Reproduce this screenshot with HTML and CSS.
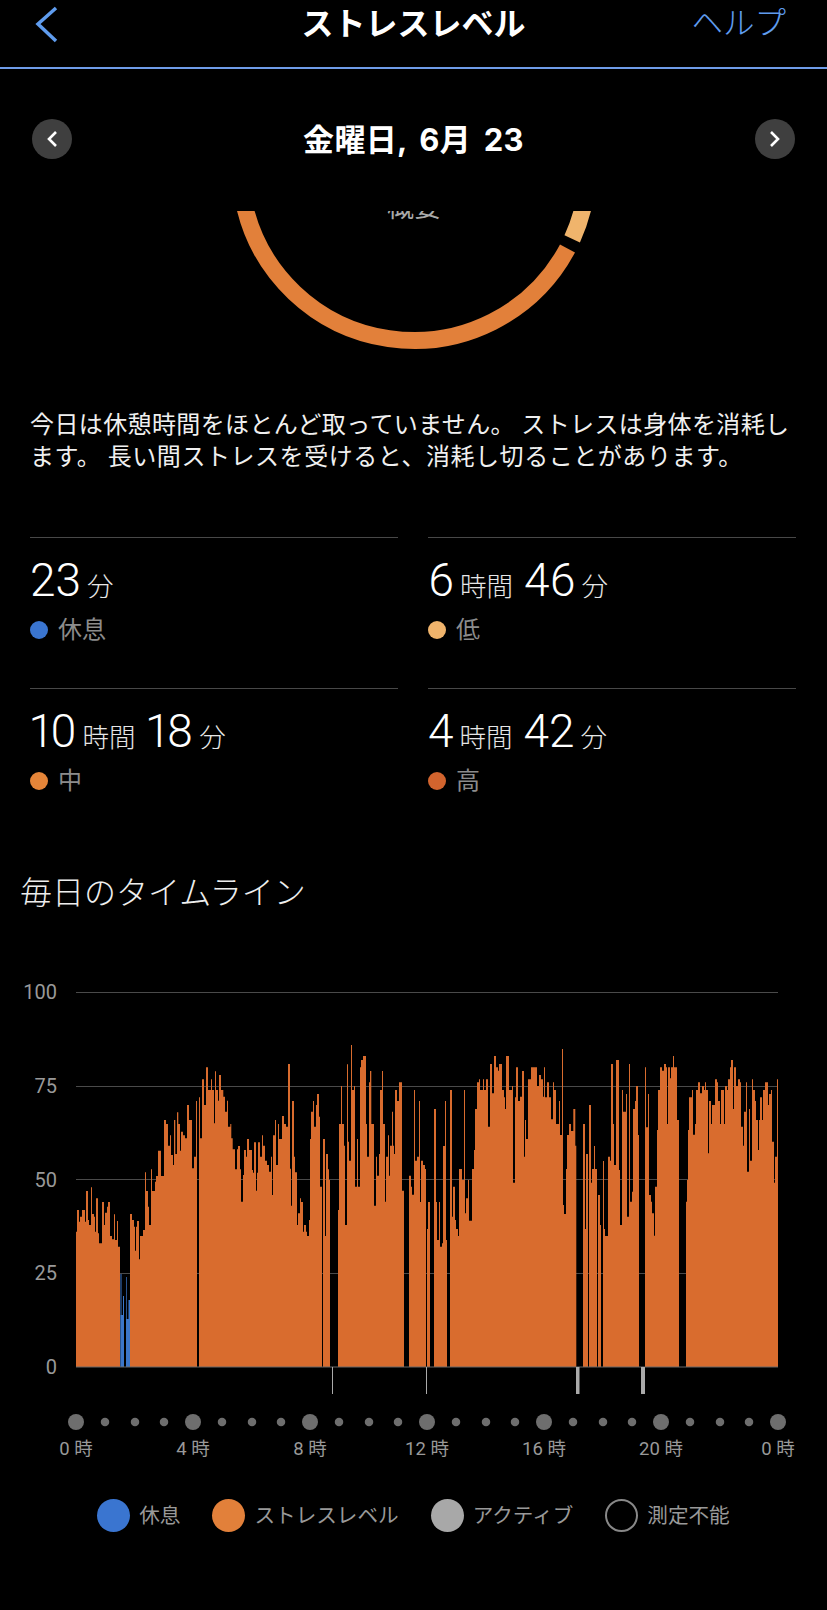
FILE: index.html
```html
<!DOCTYPE html>
<html lang="ja">
<head>
    <meta charset="UTF-8">
    <meta name="viewport" content="width=device-width, initial-scale=1.0">
    <title>ストレスレベル</title>
    <link rel="stylesheet" href="styles.css">
</head>
<body>
    <header class="top-bar">
        <svg class="back-icon" width="26" height="40" viewBox="0 0 26 40">
            <polyline points="22,4 4,20 22,37"></polyline>
        </svg>
        <h1 class="top-title">ストレスレベル</h1>
        <a class="help-link">ヘルプ</a>
    </header>

    <div class="date-row">
        <span class="date-btn">
            <svg width="12" height="18" viewBox="0 0 12 18"><polyline points="10,2 3,9 10,16"></polyline></svg>
        </span>
        <h2 class="date-text">金曜日, 6月 23</h2>
        <span class="date-btn">
            <svg width="12" height="18" viewBox="0 0 12 18"><polyline points="2,2 9,9 2,16"></polyline></svg>
        </span>
    </div>

    <svg class="ring" width="827" height="198" viewBox="0 0 827 198">
        <text class="ring-label" x="414" y="6">概要</text>
        <path class="ring-mid" d="M567.5 37.5 A174 174 0 0 1 243.5 -10"></path>
        <path class="ring-low" d="M572.2 27.9 A174 174 0 0 0 584.5 -10"></path>
    </svg>

    <p class="summary">
        <span class="summary-line">今日は休憩時間をほとんど取っていません。 ストレスは身体を消耗し</span>
        <span class="summary-line wide">ます。 長い間ストレスを受けると、消耗し切ることがあります。</span>
    </p>

    <div class="stats">
        <div class="stat">
            <div class="stat-value">23<small>分</small></div>
            <div class="stat-label"><span class="dot dot-rest"></span>休息</div>
        </div>
        <div class="stat">
            <div class="stat-value">6<small>時間</small>46<small>分</small></div>
            <div class="stat-label"><span class="dot dot-low"></span>低</div>
        </div>
        <div class="stat">
            <div class="stat-value">10<small>時間</small>18<small>分</small></div>
            <div class="stat-label"><span class="dot dot-mid"></span>中</div>
        </div>
        <div class="stat">
            <div class="stat-value">4<small>時間</small>42<small>分</small></div>
            <div class="stat-label"><span class="dot dot-high"></span>高</div>
        </div>
    </div>

    <h3 class="section-title">毎日のタイムライン</h3>

    <div class="chart">
        <div class="y-axis">
            <span>100</span>
            <span>75</span>
            <span>50</span>
            <span>25</span>
            <span>0</span>
        </div>
        <svg class="plot" width="702" height="402" viewBox="76 992 702 402">
            <g class="grid">
                <line x1="76" x2="778" y1="992.5" y2="992.5"></line>
                <line x1="76" x2="778" y1="1086.5" y2="1086.5"></line>
                <line x1="76" x2="778" y1="1179.5" y2="1179.5"></line>
                <line x1="76" x2="778" y1="1273.5" y2="1273.5"></line>
            </g>
            <path id="stressBars" class="bars-stress"></path>
            <path id="restBars" class="bars-rest"></path>
            <line class="baseline" x1="76" x2="778" y1="1367" y2="1367"></line>
            <g class="active">
                <rect x="332" y="1367" width="1" height="27"></rect>
                <rect x="426" y="1367" width="1" height="27"></rect>
                <rect x="576" y="1367" width="3.5" height="27"></rect>
                <rect x="641" y="1367" width="4" height="27"></rect>
            </g>
        </svg>
    </div>

    <div class="hour-dots">
        <span class="tick big"></span><span class="tick"></span><span class="tick"></span><span class="tick"></span>
        <span class="tick big"></span><span class="tick"></span><span class="tick"></span><span class="tick"></span>
        <span class="tick big"></span><span class="tick"></span><span class="tick"></span><span class="tick"></span>
        <span class="tick big"></span><span class="tick"></span><span class="tick"></span><span class="tick"></span>
        <span class="tick big"></span><span class="tick"></span><span class="tick"></span><span class="tick"></span>
        <span class="tick big"></span><span class="tick"></span><span class="tick"></span><span class="tick"></span>
        <span class="tick big"></span>
    </div>
    <div class="hour-labels">
        <span>0 時</span>
        <span>4 時</span>
        <span>8 時</span>
        <span>12 時</span>
        <span>16 時</span>
        <span>20 時</span>
        <span>0 時</span>
    </div>

    <div class="legend">
        <div class="legend-item"><span class="swatch swatch-rest"></span>休息</div>
        <div class="legend-item"><span class="swatch swatch-stress"></span>ストレスレベル</div>
        <div class="legend-item"><span class="swatch swatch-active"></span>アクティブ</div>
        <div class="legend-item"><span class="swatch swatch-none"></span>測定不能</div>
    </div>

    <script src="chart.js"></script>
</body>
</html>
```

FILE: styles.css
```css
* {
    box-sizing: border-box;
}
body {
    margin: 0;
    width: 827px;
    height: 1610px;
    overflow: hidden;
    background-color: #000;
    color: #fff;
    font-family: Roboto, "Noto Sans CJK JP", sans-serif;
}
h1, h2, h3, p {
    margin: 0;
}

/* top bar */
.top-bar {
    display: grid;
    grid-template-columns: 1fr auto 1fr;
    align-items: center;
    height: 69px;
    padding: 0 34px 20px 34px;
    border-bottom: 2px solid #6f9ce8;
}
.back-icon polyline {
    fill: none;
    stroke: #5f9cee;
    stroke-width: 3.5;
}
.top-title {
    font-size: 32px;
    font-weight: 700;
    line-height: 46px;
}
.help-link {
    justify-self: end;
    margin-right: 7px;
    font-size: 31.5px;
    font-weight: 300;
    line-height: 46px;
    color: #5f9cee;
}

/* date row */
.date-row {
    display: flex;
    justify-content: space-between;
    align-items: center;
    height: 40px;
    margin-top: 50px;
    padding: 0 32px;
}
.date-text {
    padding-bottom: 4px;
    font-family: Inter, "Noto Sans CJK JP", sans-serif;
    font-size: 31px;
    font-weight: 700;
    letter-spacing: 0.3px;
    word-spacing: 5px;
}
.date-btn {
    display: flex;
    align-items: center;
    justify-content: center;
    width: 40px;
    height: 40px;
    border-radius: 50%;
    background-color: #3f3f3f;
}
.date-btn polyline {
    fill: none;
    stroke: #fff;
    stroke-width: 2.6;
}

/* ring */
.ring {
    display: block;
    margin-top: 52px;
}
.ring-label {
    font-size: 27px;
    fill: #aaa;
    text-anchor: middle;
}
.ring-mid,
.ring-low {
    fill: none;
    stroke-width: 17;
}
.ring-mid {
    stroke: #e2803a;
}
.ring-low {
    stroke: #f0b46c;
}

.summary {
    padding: 0 30px;
    font-size: 24px;
    line-height: 32px;
    color: #f0f0f0;
    white-space: nowrap;
}
.summary-line {
    display: block;
    letter-spacing: 0.38px;
}
.summary-line.wide {
    letter-spacing: 0.55px;
}

/* stats */
.stats {
    display: grid;
    grid-template-columns: 368px 368px;
    gap: 0 30px;
    grid-auto-rows: 151px;
    margin-top: 64px;
    padding: 0 30px;
}
.stat {
    border-top: 1.5px solid #484848;
    padding-top: 15px;
}
.stat-value {
    font-size: 46px;
    font-weight: 300;
    font-variant-numeric: proportional-nums;
    line-height: 54px;
}
.stat-value small {
    margin: 0 11px 0 6px;
    font-size: 26.5px;
    color: #e6e6e6;
}
.stat-label {
    display: flex;
    align-items: center;
    gap: 10px;
    margin-top: -2px;
    font-size: 24px;
    line-height: 36px;
    color: #8c8c8c;
}
.dot {
    width: 18px;
    height: 18px;
    border-radius: 50%;
}
.dot-rest { background-color: #3a75d0; }
.dot-low { background-color: #f0b46c; }
.dot-mid { background-color: #e58539; }
.dot-high { background-color: #d2642e; }

.section-title {
    margin-top: 31px;
    padding-left: 20px;
    font-size: 32px;
    font-weight: 300;
    line-height: 46px;
    color: #eee;
}

/* chart */
.chart {
    display: flex;
    align-items: flex-start;
    margin-top: 66px;
    padding-left: 20px;
}
.y-axis {
    display: flex;
    flex-direction: column;
    justify-content: space-between;
    width: 37px;
    height: 395px;
    margin-right: 19px;
    font-size: 20px;
    line-height: 20px;
    text-align: right;
    color: #999;
}
.plot {
    display: block;
    margin-top: 10px;
}
.grid line {
    stroke: #4a4a4a;
    stroke-width: 1;
}
.bars-stress { fill: #d96c2e; }
.bars-rest { fill: #3c76c9; }
.baseline {
    stroke: #666;
    stroke-width: 1;
}
.active rect { fill: #aaa; }

/* hours under the chart */
.hour-dots {
    display: flex;
    justify-content: space-between;
    width: 718px;
    margin: 20px 0 0 68px;
}
.tick {
    width: 16px;
    height: 16px;
    border-radius: 50%;
    background-color: #6e6e6e;
    transform: scale(0.53);
}
.tick.big {
    transform: none;
}
.hour-labels {
    display: flex;
    justify-content: space-between;
    width: 756px;
    margin: 6px 0 0 49px;
    font-size: 18.5px;
    line-height: 26px;
    color: #999;
}
.hour-labels span {
    width: 54px;
    text-align: center;
    white-space: nowrap;
}

/* legend */
.legend {
    display: flex;
    justify-content: center;
    gap: 32px;
    margin-top: 37px;
    font-size: 20.6px;
    line-height: 32px;
    color: #999;
}
.legend-item {
    display: flex;
    align-items: center;
    gap: 9px;
}
.swatch {
    width: 33px;
    height: 33px;
    border-radius: 50%;
}
.swatch-rest { background-color: #3a75d0; }
.swatch-stress { background-color: #e2803a; }
.swatch-active { background-color: #a8a8a8; }
.swatch-none { border: 2px solid #888; }
```

FILE: chart.js
```js
// Each strip starts at page x "left"; steps are [x, top] in thirds of a pixel,
// counted from "left" and from y = 1030. A top of 1011 is the zero line (no bar).
const ZERO = 1011;
const strips = [
    { left: 70, steps: [[18,605],[21,540],[27,575],[30,560],[36,540],[45,575],[48,483],[54,570],[57,585],[63,472],[66,552],[72,560],[75,605],[78,505],[84,610],[87,640],[96,516],[102,585],[105,548],[111,530],[114,516],[120,618],[126,628],[132,553],[135,630],[141,573],[144,650],[150,ZERO],[180,552],[186,570],[192,590],[195,662],[198,590],[201,573],[207,688],[210,618],[219,600],[225,427],[228,483],[234,530],[237,585],[243,418],[246,483],[255,455],[258,438],[264,362],[273,438],[282,270],[288,282],[294,347],[300,316],[303,375],[309,405],[312,270],[316,372],[321,247],[325,282],[330,362],[333,305],[339,316],[345,325],[351,225],[357,270],[366,415],[372,380],[378,213],[381,ZERO],[387,202],[390,325],[396,148],[402,225],[408,112],[414,180],[423,148],[426,180],[432,280],[435,124],[438,180],[444,212],[447,135],[453,180],[460,200],[465,245],[471,212],[474,290],[481,282],[484,325],[488,358],[495,418],[501,358],[504,348],[510,418],[513,515],[519,435],[522,360],[528,380],[531,327],[537,360]] },
    { left: 250, steps: [[0,360],[6,420],[9,428],[12,337],[18,482],[21,428],[24,337],[30,380],[36,316],[39,347],[45,392],[51,405],[57,425],[63,380],[66,495],[69,316],[75,270],[78,405],[84,282],[87,327],[96,258],[102,282],[108,290],[114,102],[120,416],[123,527],[126,213],[132,380],[135,427],[141,585],[144,550],[150,505],[153,516],[159,605],[162,585],[168,605],[171,618],[177,570],[180,327],[183,245],[189,213],[192,290],[198,225],[201,192],[207,260],[210,470],[216,ZERO],[219,327],[225,618],[228,372],[234,418],[237,450],[240,ZERO],[264,540],[267,282],[273,168],[276,282],[282,347],[285,585],[291,103],[294,335],[297,392],[303,45],[306,180],[312,168],[315,470],[321,327],[324,470],[330,112],[333,90],[339,78],[348,282],[351,380],[357,157],[360,123],[364,282],[372,527],[378,380],[381,437],[387,372],[390,180],[396,123],[399,282],[405,515],[408,380],[414,316],[417,437],[420,347],[426,245],[429,347],[432,372],[435,180],[441,213],[447,157],[456,482],[462,ZERO],[477,437],[483,470],[486,494],[492,180],[495,392],[501,380],[507,213],[510,516],[513,392],[519,405],[525,417],[528,ZERO],[531,597],[534,516]] },
    { left: 430, steps: [[0,ZERO],[12,237],[18,516],[21,630],[27,516],[30,650],[36,640],[39,348],[45,213],[48,630],[51,ZERO],[60,180],[66,560],[69,470],[75,570],[78,597],[84,618],[87,417],[96,450],[102,180],[105,550],[108,505],[114,450],[117,572],[126,417],[132,360],[135,237],[141,157],[147,148],[150,180],[159,148],[162,180],[168,148],[174,290],[180,102],[186,190],[192,78],[198,112],[204,122],[207,102],[216,180],[222,202],[225,237],[228,78],[237,180],[246,168],[249,458],[255,202],[258,112],[264,213],[270,200],[276,123],[282,380],[285,270],[288,327],[294,148],[303,112],[321,168],[327,135],[333,148],[339,200],[342,112],[345,202],[351,157],[357,202],[363,268],[369,157],[372,180],[378,282],[387,213],[390,315],[396,57],[399,525],[402,552],[408,417],[411,315],[417,282],[423,303],[430,237],[436,347],[439,ZERO],[459,282],[465,597],[468,372],[474,ZERO],[477,225],[483,458],[486,417],[492,348],[495,417],[501,ZERO],[504,495],[510,585],[513,ZERO],[519,393],[522,597],[525,618],[534,380]] },
    { left: 610, steps: [[0,392],[3,102],[9,282],[12,405],[18,90],[27,420],[30,585],[36,180],[39,245],[48,192],[51,560],[57,102],[60,515],[66,485],[69,237],[75,213],[78,168],[84,315],[87,ZERO],[105,112],[108,292],[114,192],[117,495],[123,515],[126,550],[132,617],[135,470],[141,300],[144,180],[150,112],[156,122],[162,102],[168,112],[171,282],[174,112],[180,145],[183,112],[189,78],[192,112],[201,270],[207,ZERO],[228,515],[231,450],[234,300],[237,202],[246,180],[249,314],[255,282],[258,180],[264,157],[270,190],[276,168],[282,180],[285,157],[288,180],[294,370],[297,213],[303,282],[306,225],[315,148],[321,157],[324,213],[330,282],[333,180],[342,282],[345,168],[351,180],[354,148],[360,112],[363,90],[369,237],[372,112],[378,168],[384,148],[390,157],[393,290],[399,347],[402,245],[408,157],[411,425],[417,237],[420,392],[426,148],[429,180],[435,213],[438,270],[444,360],[447,270],[450,202],[456,270],[459,180],[465,157],[474,225],[477,192],[483,180],[486,335],[492,458],[495,380],[501,148],[504,ZERO]] }
];

// turn the strips into page coordinates
const points = [];
strips.forEach(function(strip) {
    strip.steps.forEach(function(step) {
        points.push([strip.left + step[0] / 3, 1030 + step[1] / 3]);
    });
});

// one stepped outline for all the stress bars
let outline = 'M76 1367';
points.forEach(function(point, i) {
    const next = points[i + 1];
    if (next) {
        outline += ' V' + point[1].toFixed(1) + ' H' + next[0].toFixed(1);
    }
});
outline += ' V1367 Z';
document.getElementById('stressBars').setAttribute('d', outline);

// the two short rest periods around 1:30
const rest = [[120.3,1315,124],[120.5,1274,121.5],[123,1296,124],[126,1319,130],[126.3,1277,127],[128.5,1300,130]];
document.getElementById('restBars').setAttribute('d', rest.map(function(bar) {
    return 'M' + bar[0] + ' 1367 V' + bar[1] + ' H' + bar[2] + ' V1367 Z';
}).join(' '));
```
